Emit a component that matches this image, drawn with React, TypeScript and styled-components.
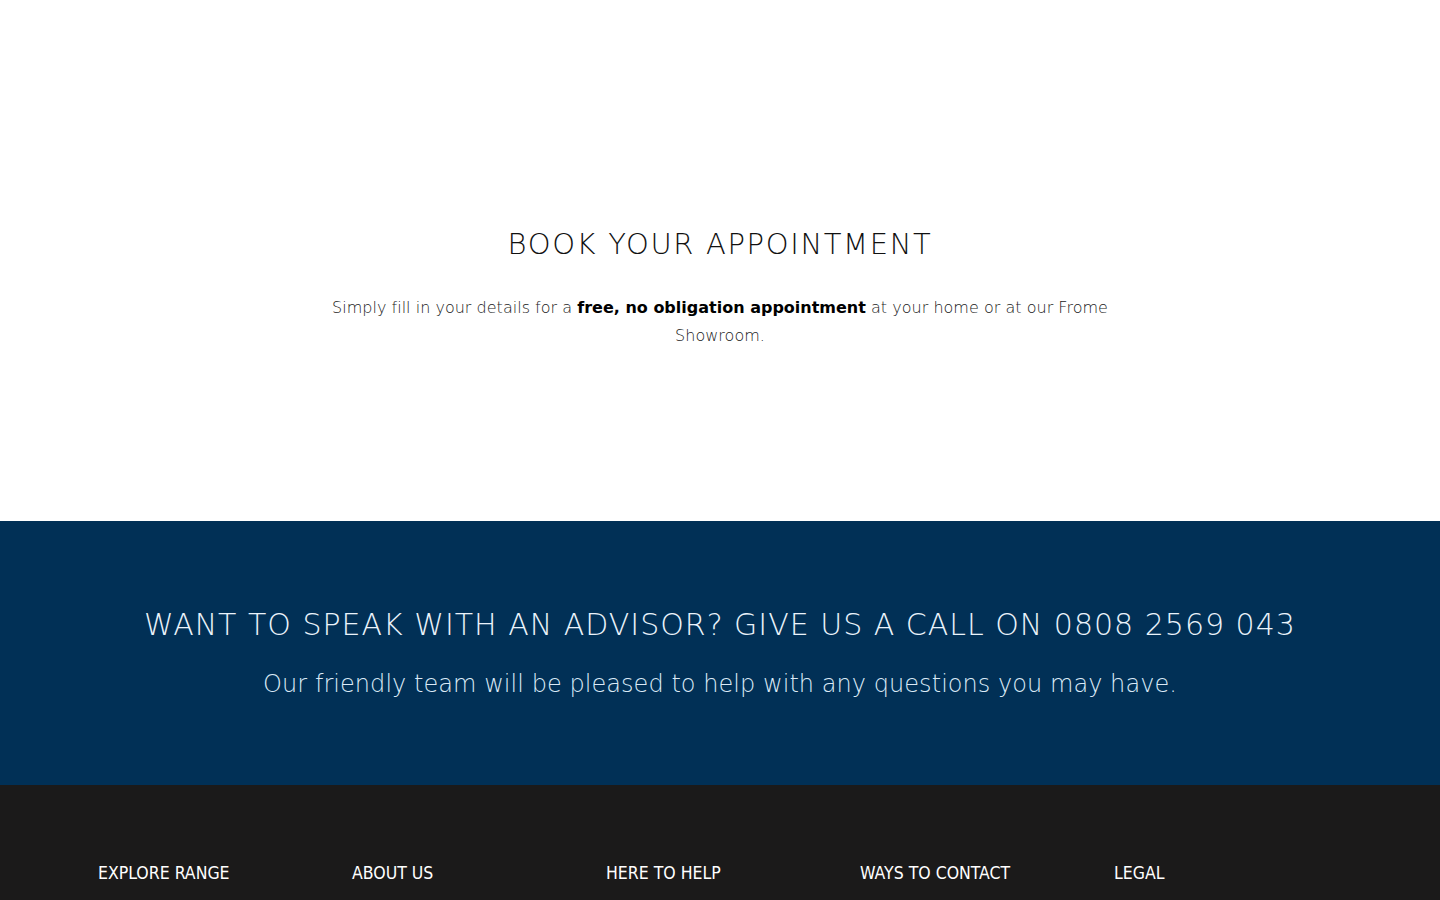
import React from 'react';
import styled, { createGlobalStyle } from 'styled-components';

const GlobalStyle = createGlobalStyle`
  html, body {
    margin: 0;
    padding: 0;
    background: #ffffff;
    font-family: "DejaVu Sans", sans-serif;
  }
`;

// Appointment intro section
const Intro = styled.section`
  height: 521px;
  display: flex;
  flex-direction: column;
  align-items: center;
  padding-top: 226px;
  box-sizing: border-box;
  background: #ffffff;
`;

const IntroTitle = styled.h1`
  margin: 0;
  font-family: "DejaVu Sans", sans-serif;
  font-weight: 200;
  font-size: 29px;
  letter-spacing: 1.65px;
  line-height: 36px;
  color: #111111;
`;

const IntroText = styled.p`
  margin: 32px 0 0;
  max-width: 800px;
  text-align: center;
  font-family: "DejaVu Sans", sans-serif;
  font-weight: 200;
  font-size: 16px;
  letter-spacing: 0.02px;
  line-height: 28px;
  color: #222222;

  strong {
    font-weight: 700;
    color: #000000;
    letter-spacing: 0;
  }
`;

// Advisor call band
const CallBand = styled.section`
  height: 264px;
  background: #013056;
  display: flex;
  flex-direction: column;
  align-items: center;
  padding-top: 86px;
  box-sizing: border-box;
`;

const CallTitle = styled.h2`
  margin: 0;
  font-family: "DejaVu Sans", sans-serif;
  font-weight: 200;
  font-size: 30px;
  letter-spacing: 1px;
  line-height: 36px;
  color: #eaf3fb;
`;

const CallText = styled.p`
  margin: 25px 0 0;
  font-family: "DejaVu Sans", sans-serif;
  font-weight: 200;
  font-size: 24px;
  letter-spacing: 0.05px;
  line-height: 32px;
  color: #dbeaf7;
`;

// Footer with link columns
const Footer = styled.footer`
  background: #1b1a1a;
  height: 115px;
  padding: 77px 0 0 98px;
  box-sizing: border-box;
  display: grid;
  grid-template-columns: repeat(5, 254px);
`;

const FooterHeading = styled.h3`
  margin: 0;
  font-family: "DejaVu Sans Condensed", "DejaVu Sans", sans-serif;
  font-weight: 400;
  font-size: 17.5px;
  line-height: 22px;
  color: #ffffff;
`;

const footerColumns = ['EXPLORE RANGE', 'ABOUT US', 'HERE TO HELP', 'WAYS TO CONTACT', 'LEGAL'];

export default function App() {
  return (
    <>
      <GlobalStyle />
      <Intro>
        <IntroTitle>BOOK YOUR APPOINTMENT</IntroTitle>
        <IntroText>
          Simply fill in your details for a <strong>free, no obligation appointment</strong> at your home or at our Frome Showroom.
        </IntroText>
      </Intro>
      <CallBand>
        <CallTitle>WANT TO SPEAK WITH AN ADVISOR? GIVE US A CALL ON 0808 2569 043</CallTitle>
        <CallText>Our friendly team will be pleased to help with any questions you may have.</CallText>
      </CallBand>
      <Footer>
        {footerColumns.map((title) => (
          <FooterHeading key={title}>{title}</FooterHeading>
        ))}
      </Footer>
    </>
  );
}
